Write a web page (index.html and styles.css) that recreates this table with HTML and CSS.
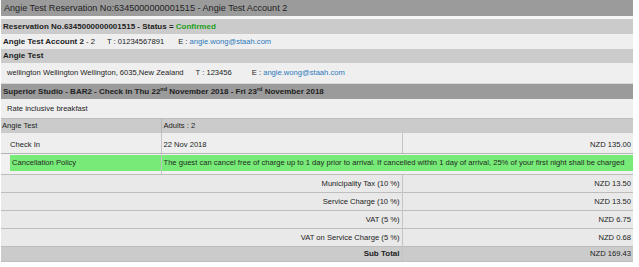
FILE: index.html
```html
<!DOCTYPE html>
<html>
<head>
<meta charset="utf-8">
<link rel="stylesheet" href="styles.css">
</head>
<body>
<div class="sheet">
  <div class="title">Angie Test Reservation No:6345000000001515 - Angie Test Account 2</div>
  <div class="gap"></div>
  <div class="bar bold">Reservation No.6345000000001515 - Status = <span class="ok">Confirmed</span></div>
  <div class="line contact">
    <span><b>Angie Test Account 2</b> - 2</span>
    <span>T : 01234567891</span>
    <span class="em">E : <a class="mail">angie.wong@staah.com</a></span>
  </div>
  <div class="bar bold short">Angie Test</div>
  <div class="line tall indent contact addr">
    <span>wellington Wellington Wellington, 6035,New Zealand</span>
    <span>T : 123456</span>
    <span class="em">E : <a class="mail">angie.wong@staah.com</a></span>
  </div>
  <div class="room bold">Superior Studio - BAR2 - Check in Thu 22<sup>nd</sup> November 2018 - Fri 23<sup>rd</sup> November 2018</div>
  <div class="line rate">Rate inclusive breakfast</div>
  <table class="grid">
    <colgroup><col class="c1"><col class="c2"><col class="c3"></colgroup>
    <tr class="guest"><td>Angie Test</td><td colspan="2">Adults : 2</td></tr>
    <tr class="stay"><td class="lbl">Check In</td><td>22 Nov 2018</td><td class="num">NZD 135.00</td></tr>
    <tr class="policy"><td class="lbl"><span class="hl">Cancellation Policy</span></td><td colspan="2" class="pol"><span class="hl">The guest can cancel free of charge up to 1 day prior to arrival. If cancelled within 1 day of arrival, 25% of your first night shall be charged</span></td></tr>
  </table>
  <table class="grid taxes">
    <colgroup><col class="c12"><col class="c3"></colgroup>
    <tr><td class="num">Municipality Tax (10 %)</td><td class="num">NZD 13.50</td></tr>
    <tr><td class="num">Service Charge (10 %)</td><td class="num">NZD 13.50</td></tr>
    <tr><td class="num">VAT (5 %)</td><td class="num">NZD 6.75</td></tr>
    <tr><td class="num">VAT on Service Charge (5 %)</td><td class="num">NZD 0.68</td></tr>
    <tr class="total"><td class="num bold">Sub Total</td><td class="num">NZD 169.43</td></tr>
  </table>
</div>
</body>
</html>
```
FILE: styles.css
```css
html, body {
  margin: 0;
  background: #ffffff;
}
body {
  font-family: "Liberation Sans", Arial, sans-serif;
  font-size: 7.6px;
  color: #222222;
}
.sheet {
  width: 632px;
  margin-left: 1px;
  background: #f4f4f4;
}
.title {
  height: 16px;
  line-height: 16px;
  background: #9b9b9b;
  font-size: 9.1px;
  color: #1e1e1e;
  padding-left: 3px;
}
.gap {
  height: 3px;
  background: #f6f6f6;
}
.bold { font-weight: bold; font-size: 8px; }
.bar {
  height: 15px;
  line-height: 15px;
  background: #cbcbcb;
  padding-left: 2px;
}
.bar.short { height: 14px; line-height: 14px; }
.ok { color: #1d9e1d; }
.line {
  height: 15px;
  line-height: 15px;
  background: #efefef;
  padding-left: 2px;
}
.line.tall { height: 20px; line-height: 20px; }
.line.indent { padding-left: 6px; }
.contact {
  display: flex;
  gap: 12px;
}
.contact b { font-weight: bold; font-size: 8px; }
.contact .em { margin-left: 2px; }
.addr .em { margin-left: 8px; }
.mail { color: #2b78bb; text-decoration: none; }
.room {
  height: 15px;
  line-height: 15px;
  background: #9b9b9b;
  padding-left: 2px;
  border-top: 1px solid #d8d8d8;
}
.rate {
  height: 19px;
  line-height: 19px;
  padding-left: 6px;
  border-bottom: 1px solid #bdbdbd;
}
sup { font-size: 5.5px; line-height: 0; vertical-align: 3px; }
.grid {
  width: 632px;
  border-collapse: collapse;
  table-layout: fixed;
}
.c1 { width: 160px; }
.c2 { width: 241px; }
.c3 { width: 231px; }
.c12 { width: 401px; }
.grid td {
  padding: 0 2px;
  white-space: nowrap;
  overflow: hidden;
}
.guest td {
  line-height: 14px;
  background: #cbcbcb;
  border-left: 1px solid #b5b5b5;
}
.guest td:first-child { border-left: none; padding-left: 1px; }
.stay td {
  padding-top: 3px;
  line-height: 17px;
  background: #eeeeee;
  border-left: 1px solid #c4c4c4;
  border-bottom: 1px solid #b5b5b5;
}
.stay td:first-child { border-left: none; }
.stay .lbl { padding-left: 9px; }
.num { text-align: right; }
.policy td {
  padding: 1px 0 3px 0;
  background: #f1f1f1;
  vertical-align: top;
}
.policy td.pol { border-left: 1px solid #c4c4c4; }
.policy td.lbl { padding-left: 9px; }
.hl {
  display: block;
  height: 16px;
  line-height: 16px;
  background: #77ea77;
  color: #1f2a1f;
}
.policy .lbl .hl { padding-left: 2px; }
.policy .pol .hl { padding-left: 2px; }
.taxes td {
  line-height: 17px;
  background: #e9e9e9;
  border-top: 1px solid #bdbdbd;
  border-left: 1px solid #c4c4c4;
}
.taxes td:first-child { border-left: none; }
.taxes .total td {
  line-height: 14px;
  background: #cbcbcb;
  border-bottom: 1px solid #bdbdbd;
}
```
